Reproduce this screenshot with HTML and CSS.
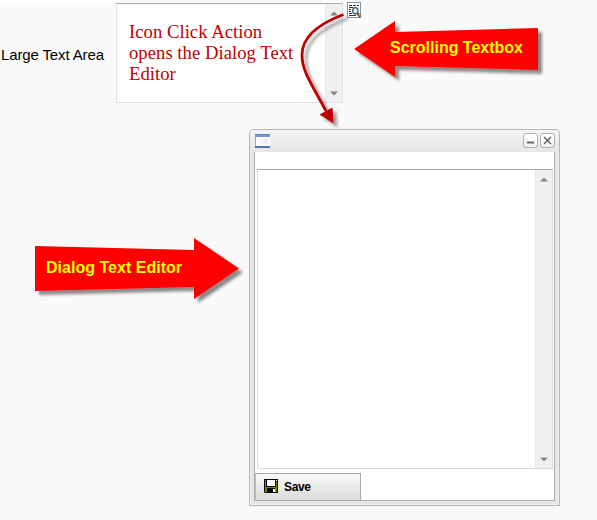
FILE: index.html
```html
<!DOCTYPE html>
<html lang="en">
<head>
<meta charset="utf-8">
<title>Large Text Area</title>
<link rel="stylesheet" href="styles.css">
</head>
<body>
<main class="page">
  <div class="top-strip"></div>
  <section class="field">
    <label class="field-label">Large Text Area</label>
    <div class="textbox">
      <p class="textbox-text">Icon Click Action<br>opens the Dialog Text<br>Editor</p>
      <div class="scrollbar">
        <svg width="8" height="5"><path d="M0 4.5 4 .5 8 4.5Z" fill="#858585"/></svg>
        <svg width="8" height="5"><path d="M0 .5H8L4 4.5Z" fill="#858585"/></svg>
      </div>
    </div>
    <svg class="open-icon" width="16" height="17" viewBox="0 0 16 17">
      <rect x=".5" y=".5" width="13" height="15" fill="#fff" stroke="#8694a0"/>
      <path d="M2 3.5H5M6 3.5H9M10 3.500H12M2 5.5H6M2 7.5H4M2 9.5H4M2 11.5H5M2 13.5H9" stroke="#30363c"/>
      <ellipse cx="8.3" cy="8.8" rx="2.7" ry="3.1" fill="#d5eef8" stroke="#3f5568" stroke-width="1.2"/>
      <path d="M10.400 11.300 13.800 15" stroke="#554838" stroke-width="2.6"/>
      <path d="M11.500 12 14.400 15" stroke="#d8a24c" stroke-width="1.1"/>
    </svg>
  </section>

  <section class="dialog">
    <header class="titlebar">
      <svg width="15" height="14" viewBox="0 0 15 14">
        <defs><linearGradient id="pane" x2="1"><stop stop-color="#fff"/><stop offset="1" stop-color="#e9e9e9"/></linearGradient></defs>
        <rect width="15" height="14" fill="#fff"/>
        <rect width="15" height="3" fill="#6f98d4"/><path d="M0 .5H15" stroke="#5e88c8"/>
        <path d="M12 1.5h1" stroke="#d26e78"/>
        <path d="M.5 3V12" stroke="#8daede"/>
        <rect x="2" y="4.5" width="11" height="6" fill="url(#pane)"/>
        <rect y="12" width="15" height="2" fill="#4f77b9"/>
      </svg>
      <div class="window-buttons">
        <span class="window-button"><svg width="13" height="13"><path d="M3 8.5H10" stroke="#666" stroke-width="2"/></svg></span>
        <span class="window-button"><svg width="13" height="13"><path d="M3 3 10 10M10 3 3 10" stroke="#555" stroke-width="1.200"/></svg></span>
      </div>
    </header>
    <div class="dialog-body">
      <div class="editor">
        <div class="scrollbar">
          <svg width="8" height="5"><path d="M0 4.5 4 .5 8 4.5Z" fill="#858585"/></svg>
          <svg width="8" height="5"><path d="M0 .5H8L4 4.5Z" fill="#858585"/></svg>
        </div>
      </div>
      <div class="save">
        <svg width="14" height="14" viewBox="0 0 14 14">
          <path d="M0 0H14V14H1L0 13Z" fill="#080808"/>
          <path d="M1 1H2V8H12V3H13V13H11V9H3V13H1Z" fill="#818100"/>
          <rect x="3" y="1" width="8" height="6" fill="#fff"/>
          <rect x="12" y="1" width="1" height="1" fill="#fff"/>
          <rect x="9" y="10" width="2" height="3" fill="#fff"/>
        </svg>
        <span class="save-text">Save</span>
      </div>
    </div>
  </section>

  <svg class="callouts" width="597" height="520" viewBox="0 0 597 520">
    <defs>
      <filter id="shadow" x="-20%" y="-30%" width="150%" height="180%">
        <feDropShadow dx="4" dy="4" stdDeviation="1.5" flood-color="#000" flood-opacity=".45"/>
      </filter>
      <filter id="soft-shadow" x="-20%" y="-20%" width="160%" height="150%">
        <feDropShadow dx="4" dy="4" stdDeviation="1.500" flood-color="#000" flood-opacity=".36"/>
      </filter>
    </defs>
    <path filter="url(#shadow)" fill="#f00" d="M354 49 395 21V32L538 28V70L395 66V77Z"/>
    <path filter="url(#shadow)" fill="#f00" d="M35 246 194 250V238L239 268.500 194 299V287L35 291Z"/>
    <g filter="url(#soft-shadow)">
      <path d="M343.500 14.500C313 26 302 40 302 55C302 71 311 83 326 111" fill="none" stroke="#c00000" stroke-width="2.800"/>
      <path d="M319.500 114.500 332.500 107.500 333.500 123.500Z" fill="#c00000"/>
    </g>
    <text class="callout-text" x="390" y="53" textLength="133">Scrolling Textbox</text>
    <text class="callout-text" x="46" y="273" textLength="136">Dialog Text Editor</text>
  </svg>
</main>
</body>
</html>
```

FILE: styles.css
```css
* { box-sizing: border-box; }
body { margin: 0; background: #fafafa; font-family: "Liberation Sans", Arial, sans-serif; }
svg { display: block; flex: none; }
.page { position: relative; width: 597px; height: 520px; overflow: hidden; }
.top-strip { width: 114px; height: 4px; margin-bottom: -1px; background: #fff; }
.field { display: flex; height: 126px; }
.field-label { width: 116px; padding: 43px 0 0 1px; font-size: 15px; line-height: 18px; letter-spacing: -.13px; color: #000; white-space: nowrap; }
.textbox { display: flex; width: 227px; height: 100px; background: #fff; border: 1px solid #dde3ea; border-top-color: #a9a9a9; }
.textbox-text { flex: 1; margin: 0; padding: 17px 0 0 12px; font: 18.67px/21px "Liberation Serif", "Times New Roman", serif; letter-spacing: .03px; color: #c00000; white-space: nowrap; }
.scrollbar { display: flex; flex: none; flex-direction: column; align-items: center; justify-content: space-between; width: 17px; padding: 7px 0 6px; background: #f0f0f0; border-left: 1px solid #e8e8e8; }
.open-icon { margin: -1px 0 0 4px; }
.dialog { width: 311px; height: 377px; margin-left: 249px; padding: 0 4px 4px; background: #e5e5e5; border: 1px solid #b5b5b5; border-radius: 4px 4px 0 0; box-shadow: inset 0 0 0 1px #f1f1f1; }
.titlebar { display: flex; justify-content: space-between; height: 22px; margin: 0 -4px; padding: 4px 4px 0 5px; background: linear-gradient(#f4f4f4, #e7e7e7); border-radius: 3px 3px 0 0; }
.window-buttons { display: flex; gap: 2px; margin-top: -1px; }
.window-button { width: 15px; height: 15px; background: linear-gradient(#fff, #f1f1f1); border: 1px solid #b0b0b0; border-radius: 3px; }
.dialog-body { display: flex; flex-direction: column; height: 349px; padding-top: 17px; background: #fff; border: 1px solid #aeaeb0; border-top: 0; }
.editor { display: flex; flex: none; justify-content: flex-end; width: 296px; height: 300px; margin-left: 2px; border: 1px solid #d9d9e1; border-top-color: #a9a9a9; }
.save { display: flex; flex: none; gap: 6px; width: 106px; height: 28px; margin: 4px 0 0; padding: 5px 0 0 8px; background: linear-gradient(#fafafa, #dadada); border: 1px solid #a7aab0; border-left-color: #b9bbc0; }
.save-text { font: bold 12px/16px "Liberation Sans", Arial, sans-serif; letter-spacing: -.35px; color: #000; }
.callouts { position: absolute; inset: 0; pointer-events: none; }
.callout-text { fill: #ff0; font: bold 16px "Liberation Sans", Arial, sans-serif; }
```
